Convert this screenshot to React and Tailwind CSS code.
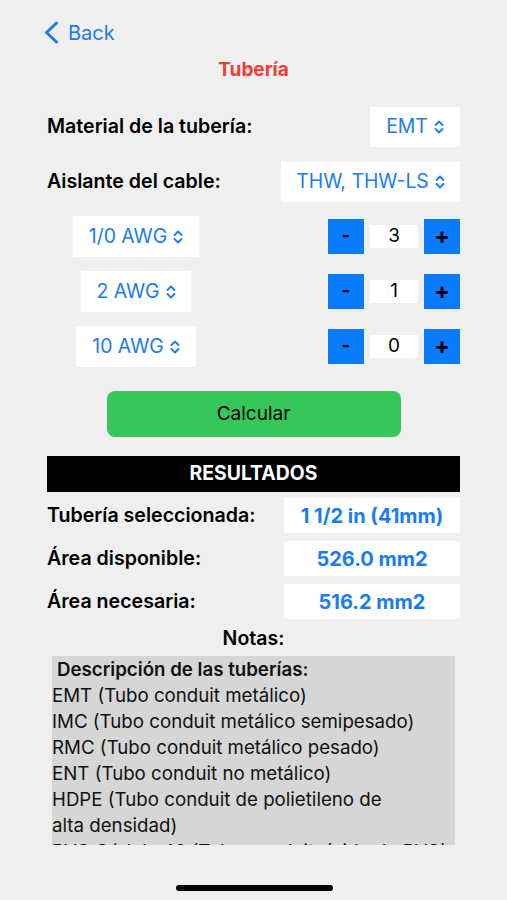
const font = { fontFamily: "Inter, 'Noto Sans', sans-serif" };

const Updown = () => (
  <svg width="10" height="14" viewBox="0 0 10 14" fill="none" stroke="currentColor" strokeWidth="1.8" strokeLinecap="round" strokeLinejoin="round" className="ml-1.5">
    <path d="M1.5 5 L5 1.5 L8.5 5" />
    <path d="M1.5 9 L5 12.5 L8.5 9" />
  </svg>
);

const Picker = ({ label, className = "" }) => (
  <div className={`flex items-center justify-center bg-white h-10 text-[19.4px] text-[#1a7cf0] ${className}`}>
    {label}
    <Updown />
  </div>
);

const Stepper = ({ value }) => (
  <div className="flex items-center gap-[6px]">
    <button className="w-9 h-[35px] bg-[#0a7aff] text-black font-bold text-[19px] flex items-center justify-center">-</button>
    <div className="w-[48px] h-[23px] bg-white flex items-center justify-center text-[19px] text-black">{value}</div>
    <button className="w-9 h-[35px] bg-[#0a7aff] text-black font-bold text-[23px] flex items-center justify-center">+</button>
  </div>
);

const ResultRow = ({ label, value }) => (
  <div className="flex items-center justify-between">
    <span className="font-semibold text-[19.6px] text-black">{label}</span>
    <div className="w-[176px] h-[35px] bg-white flex items-center justify-center font-bold text-[20px] text-[#1a7cf0]">{value}</div>
  </div>
);

const notes = [
  "EMT (Tubo conduit metálico)",
  "IMC (Tubo conduit metálico semipesado)",
  "RMC (Tubo conduit metálico pesado)",
  "ENT (Tubo conduit no metálico)",
  "HDPE (Tubo conduit de polietileno de",
  "alta densidad)",
  "PVC Cédula 40 (Tubo conduit rígido de PVC)",
];

export default function App() {
  return (
    <div className="w-[507px] h-[900px] bg-[#efefef] relative overflow-hidden" style={font}>
      {/* Nav */}
      <div className="flex items-center pl-[44px] pt-[20px] h-[45px] text-[#1a7cf0]">
        <svg width="15" height="23" viewBox="0 0 15 23" fill="none" stroke="currentColor" strokeWidth="3" strokeLinecap="round" strokeLinejoin="round">
          <path d="M12.5 2 L2.5 11.5 L12.5 21" />
        </svg>
        <span className="ml-[9px] text-[20px]">Back</span>
      </div>
      <h1 className="text-center text-[#f43a33] font-bold text-[19px] mt-[14px] leading-[22px]">Tubería</h1>

      <div className="px-[47px] mt-[26px]">
        <div className="flex items-center justify-between">
          <span className="font-semibold text-[19.6px] text-black">Material de la tubería:</span>
          <Picker label="EMT" className="w-[90px]" />
        </div>
        <div className="flex items-center justify-between mt-[15px]">
          <span className="font-semibold text-[19.6px] text-black">Aislante del cable:</span>
          <Picker label="THW, THW-LS" className="w-[179px]" />
        </div>

        <div className="flex flex-col gap-[14px] mt-[14px]">
          <div className="flex items-center justify-between">
            <div className="w-[178px] flex justify-center"><Picker label="1/0 AWG" className="w-[126px] h-[41px]" /></div>
            <Stepper value="3" />
          </div>
          <div className="flex items-center justify-between">
            <div className="w-[178px] flex justify-center"><Picker label="2 AWG" className="w-[110px] h-[41px]" /></div>
            <Stepper value="1" />
          </div>
          <div className="flex items-center justify-between">
            <div className="w-[178px] flex justify-center"><Picker label="10 AWG" className="w-[120px] h-[41px]" /></div>
            <Stepper value="0" />
          </div>
        </div>

        <div className="flex justify-center mt-[24px]">
          <button className="w-[294px] h-[46px] bg-[#35c759] rounded-[8px] text-[19px] text-black">Calcular</button>
        </div>

        <div className="mt-[19px] h-[36px] bg-black text-white font-bold text-[19.4px] flex items-center justify-center">RESULTADOS</div>

        <div className="flex flex-col gap-[8px] mt-[6px]">
          <ResultRow label="Tubería seleccionada:" value="1 1/2 in (41mm)" />
          <ResultRow label="Área disponible:" value="526.0 mm2" />
          <ResultRow label="Área necesaria:" value="516.2 mm2" />
        </div>

        <div className="text-center font-semibold text-[19.5px] text-black mt-[7px] leading-[24px]">Notas:</div>

        <div className="mx-[5px] mt-[6px] h-[189px] bg-[#d6d6d6] overflow-hidden text-[18.7px] text-[#111] leading-[26px]">
          <div className="font-semibold pl-[5px] pt-[1px]">Descripción de las tuberías:</div>
          {notes.map((n) => (
            <div key={n} className="whitespace-nowrap">{n}</div>
          ))}
        </div>
      </div>

      {/* home indicator */}
      <div className="absolute left-[176px] top-[885px] w-[157px] h-[6px] rounded-full bg-black" />
    </div>
  );
}
